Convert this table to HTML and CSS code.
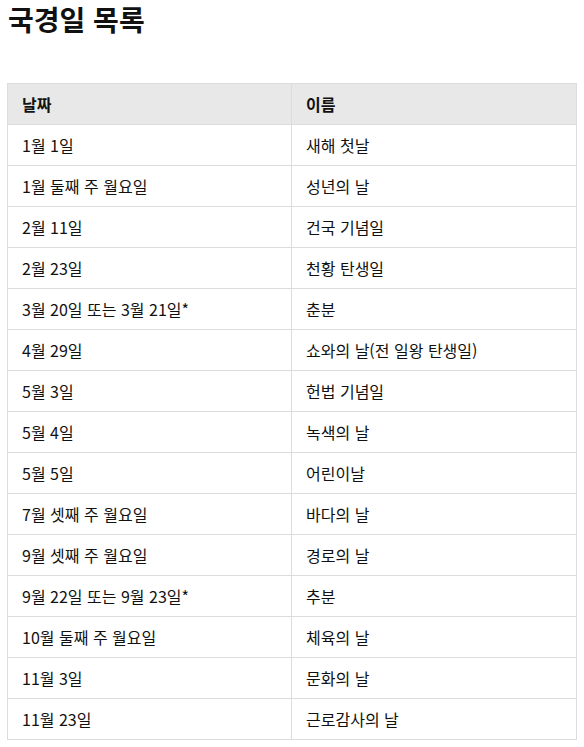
FILE: index.html
```html
<!DOCTYPE html>
<html lang="ko">
<head>
<meta charset="utf-8">
<link rel="stylesheet" href="styles.css">
</head>
<body>
<h1 class="title">국경일 목록</h1>
<table class="holidays">
<thead>
<tr><th>날짜</th><th>이름</th></tr>
</thead>
<tbody>
<tr><td>1월 1일</td><td>새해 첫날</td></tr>
<tr><td>1월 둘째 주 월요일</td><td>성년의 날</td></tr>
<tr><td>2월 11일</td><td>건국 기념일</td></tr>
<tr><td>2월 23일</td><td>천황 탄생일</td></tr>
<tr><td>3월 20일 또는 3월 21일*</td><td>춘분</td></tr>
<tr><td>4월 29일</td><td>쇼와의 날(전 일왕 탄생일)</td></tr>
<tr><td>5월 3일</td><td>헌법 기념일</td></tr>
<tr><td>5월 4일</td><td>녹색의 날</td></tr>
<tr><td>5월 5일</td><td>어린이날</td></tr>
<tr><td>7월 셋째 주 월요일</td><td>바다의 날</td></tr>
<tr><td>9월 셋째 주 월요일</td><td>경로의 날</td></tr>
<tr><td>9월 22일 또는 9월 23일*</td><td>추분</td></tr>
<tr><td>10월 둘째 주 월요일</td><td>체육의 날</td></tr>
<tr><td>11월 3일</td><td>문화의 날</td></tr>
<tr><td>11월 23일</td><td>근로감사의 날</td></tr>
</tbody>
</table>
</body>
</html>
```
FILE: styles.css
```css
html, body {
  background: #fff;
}
body {
  margin: 0;
  padding: 0 7px;
  font-family: "Noto Sans CJK KR", "Noto Sans", sans-serif;
  color: #111;
}
.title {
  margin: 0 0 0 1px;
  font-size: 28px;
  line-height: 38px;
  font-weight: 700;
  color: #111;
}
.holidays {
  margin-top: 45px;
  width: 570px;
  border-collapse: collapse;
  table-layout: fixed;
  font-size: 16px;
}
.holidays th,
.holidays td {
  border: 1px solid #dcdcdc;
  padding: 0 14px;
  height: 40px;
  text-align: left;
  vertical-align: middle;
  line-height: 20px;
}
.holidays th {
  background: #e8e8e8;
  font-weight: 700;
}
.holidays th:first-child,
.holidays td:first-child {
  width: 255px;
}
```
